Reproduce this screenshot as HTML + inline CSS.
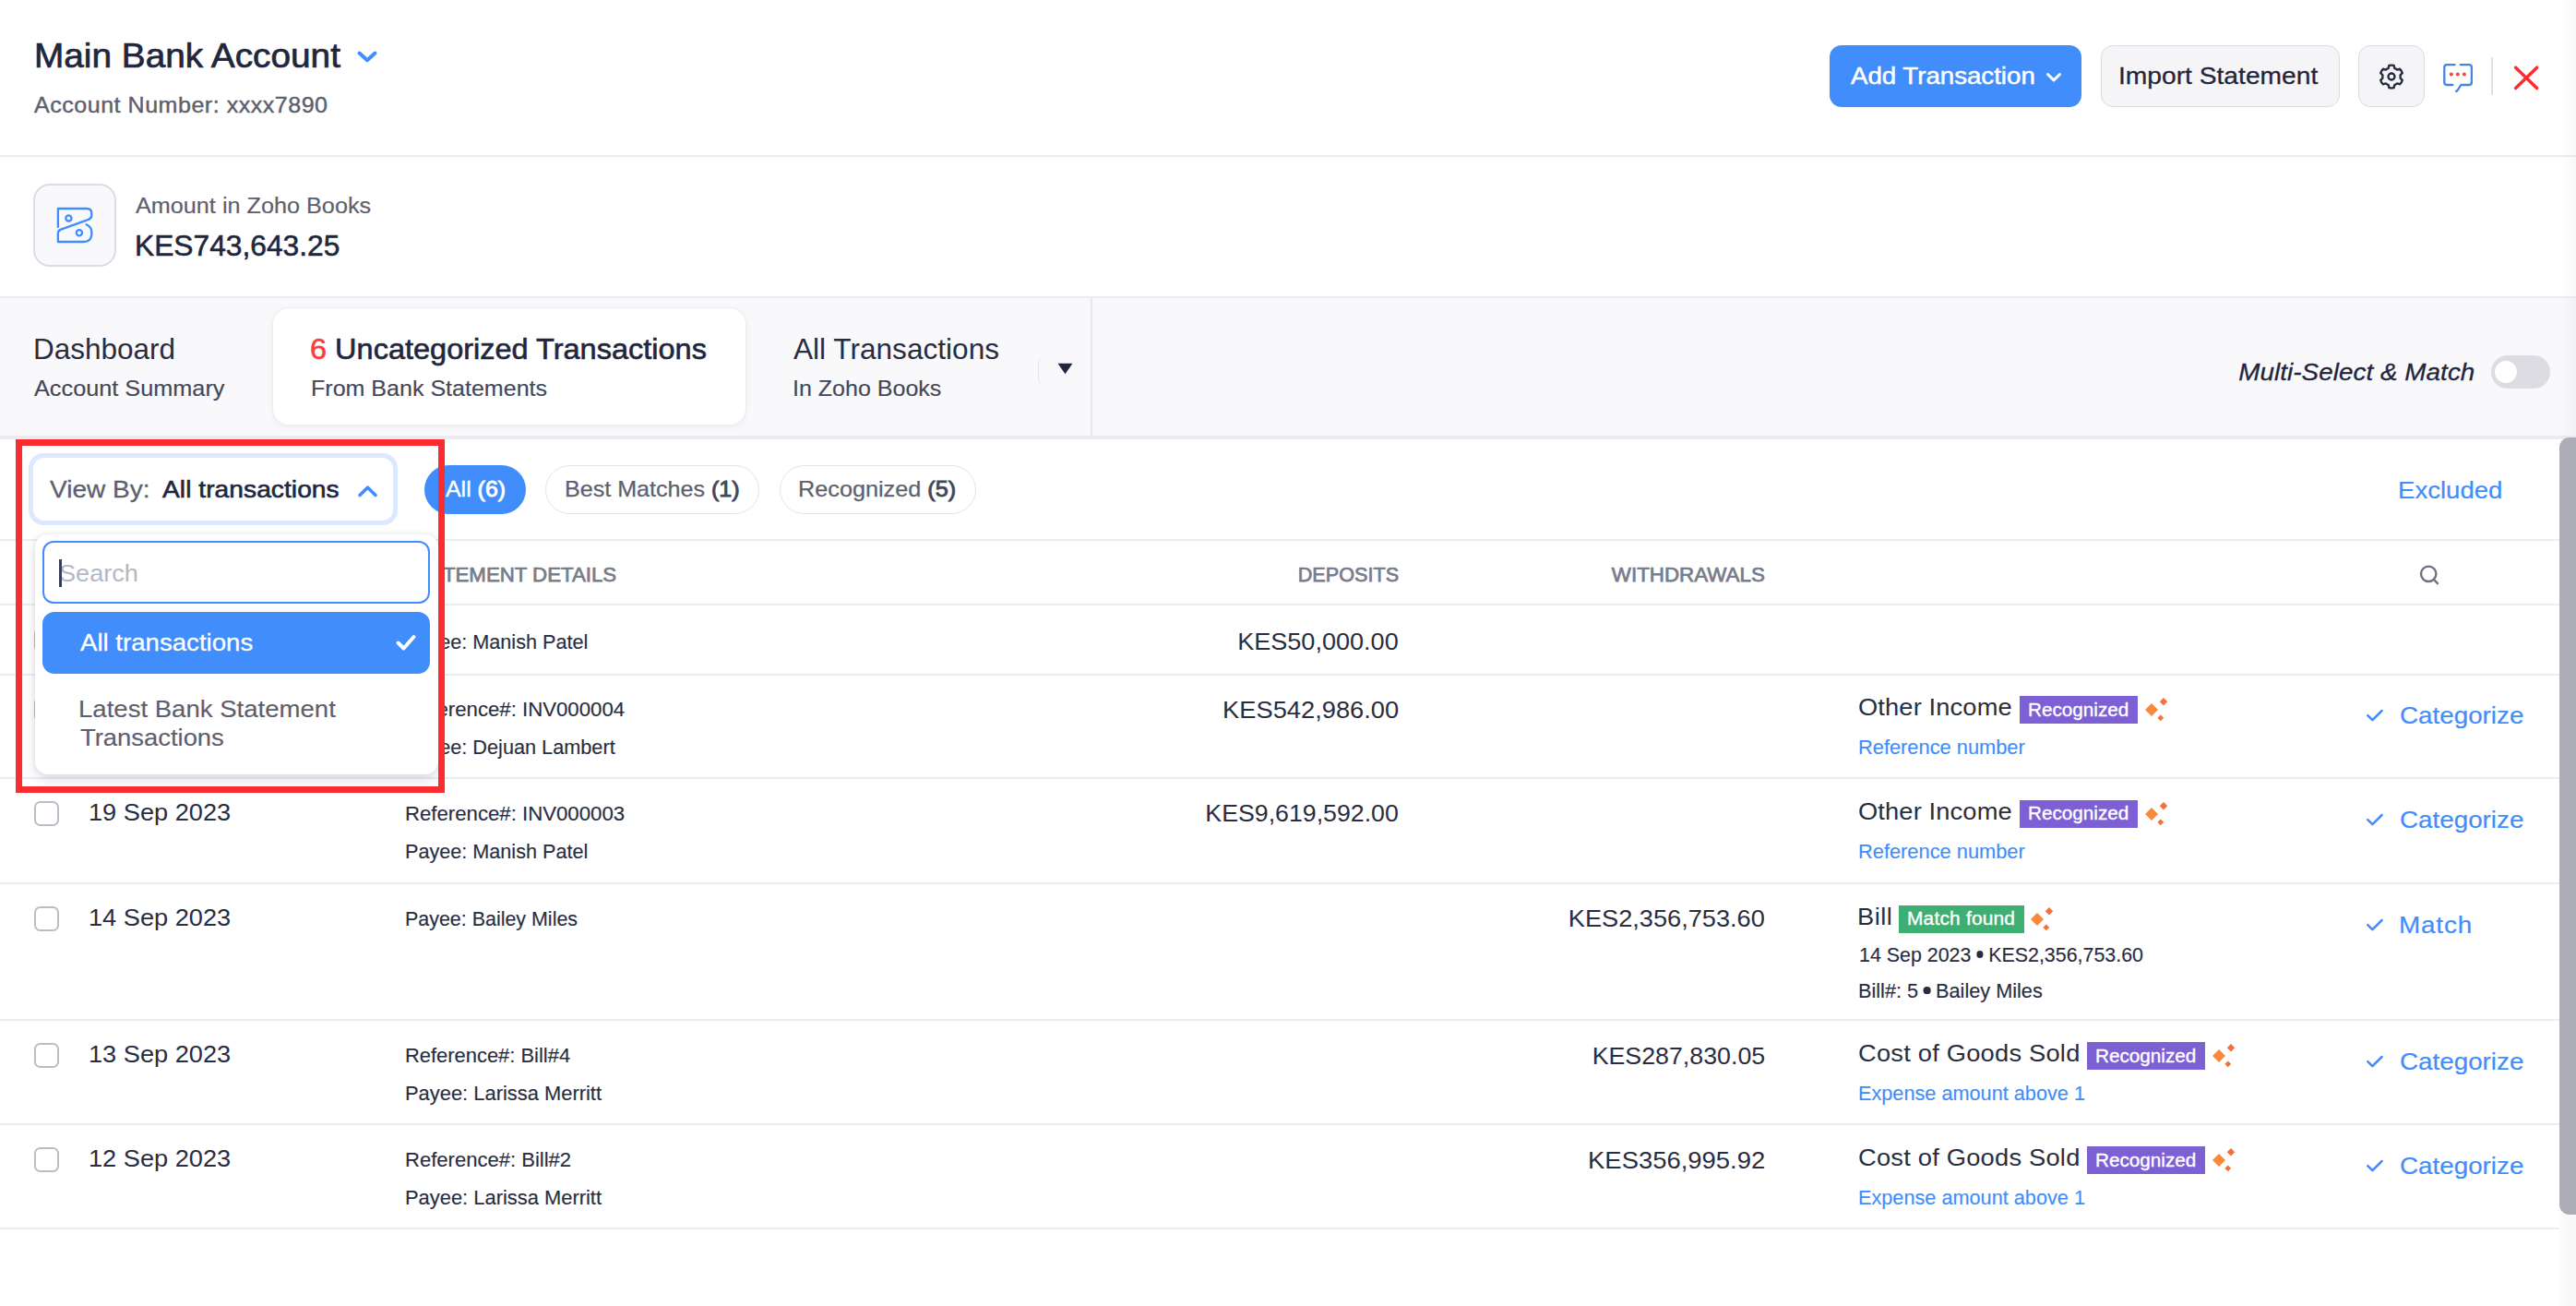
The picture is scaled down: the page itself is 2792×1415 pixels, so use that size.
<!DOCTYPE html>
<html lang="en">
<head>
<meta charset="utf-8">
<title>Main Bank Account – Uncategorized Transactions</title>
<style>
html,body{margin:0;padding:0;background:#fff}
body{width:2792px;height:1415px;overflow:hidden;position:relative;font-family:"Liberation Sans", sans-serif;}
#app{position:absolute;left:0;top:0;width:2792px;height:1415px;overflow:hidden;background:#fff}
section{position:static;margin:0;padding:0}
.t{position:absolute;white-space:nowrap;line-height:1;}
.t b{font-weight:700}
.dot{display:inline-block;width:.36em;height:.36em;border-radius:50%;background:currentColor;vertical-align:.18em;margin:0 -.02em}
</style>
</head>
<body>
<div id="app">
<section class="header">
<div style="position:absolute;left:0;top:167.5px;width:2792px;height:2px;background:#ececf3"></div>
<span class="t" id="title" style="top:43.07px;font-size:36.6px;color:#21263c;left:36.62px;-webkit-text-stroke:0.7px #21263c;transform:scaleX(1.0601);transform-origin:left center;">Main Bank Account</span>
<svg style="position:absolute;left:384px;top:52px" width="28" height="20" viewBox="0 0 28 20"><path d="M5.5 5.5 L14 13.2 L22.5 5.5" fill="none" stroke="#408dfb" stroke-width="4" stroke-linecap="round" stroke-linejoin="round"/></svg>
<span class="t" id="acct" style="top:103.08px;font-size:23.4px;color:#5c606f;left:36.70px;-webkit-text-stroke:0.4px #5c606f;letter-spacing:0.486px;transform:scaleX(1.0700);transform-origin:left center;">Account Number: xxxx7890</span>
<div style="position:absolute;left:1982.5px;top:49.4px;width:273.7px;height:66.2px;border-radius:13px;background:#408dfb"></div>
<span class="t" id="addtx" style="top:69.06px;font-size:26.5px;color:#fff;left:2005.90px;-webkit-text-stroke:0.5px #fff;transform:scaleX(1.0431);transform-origin:left center;">Add Transaction</span>
<svg style="position:absolute;left:2214px;top:75px" width="24" height="18" viewBox="0 0 24 18"><path d="M5.5 5.5 L12 11.8 L18.5 5.5" fill="none" stroke="#fff" stroke-width="3" stroke-linecap="round" stroke-linejoin="round"/></svg>
<div style="position:absolute;left:2276.5px;top:49.4px;width:259.4px;height:66.2px;border-radius:13px;background:#f5f5f8;border:1.5px solid #dbdbe2;box-sizing:border-box"></div>
<span class="t" id="import" style="top:69.06px;font-size:26.5px;color:#21263c;left:2296.37px;-webkit-text-stroke:0.3px #21263c;transform:scaleX(1.0639);transform-origin:left center;">Import Statement</span>
<div style="position:absolute;left:2556.3px;top:49.4px;width:71.3px;height:66.2px;border-radius:13px;background:#f5f5f8;border:1.5px solid #dbdbe2;box-sizing:border-box"></div>
<svg style="position:absolute;left:2575px;top:66.1px" width="34" height="34" viewBox="0 0 34 34" fill="none" stroke="#262a3e" stroke-width="2.35" stroke-linejoin="round"><path d="M14.42 4.87 A12.4 12.4 0 0 1 19.58 4.87 L20.32 7.88 A9.7 9.7 0 0 1 23.24 9.57 L26.21 8.70 A12.4 12.4 0 0 1 28.79 13.17 L26.55 15.32 A9.7 9.7 0 0 1 26.55 18.68 L28.79 20.83 A12.4 12.4 0 0 1 26.21 25.30 L23.24 24.43 A9.7 9.7 0 0 1 20.32 26.12 L19.58 29.13 A12.4 12.4 0 0 1 14.42 29.13 L13.68 26.12 A9.7 9.7 0 0 1 10.76 24.43 L7.79 25.30 A12.4 12.4 0 0 1 5.21 20.83 L7.45 18.68 A9.7 9.7 0 0 1 7.45 15.32 L5.21 13.17 A12.4 12.4 0 0 1 7.79 8.70 L10.76 9.57 A9.7 9.7 0 0 1 13.68 7.88 Z"/><circle cx="17" cy="17" r="3.5"/></svg>
<svg style="position:absolute;left:2645px;top:66px" width="38" height="36" viewBox="0 0 38 36" fill="none" stroke-linecap="round" stroke-linejoin="round"><path d="M15.6 4.2 H7 Q4.3 4.2 4.3 7 V23.3 Q4.3 26 7 26 H13.4 M21.8 4.2 H31.2 Q33.9 4.2 33.9 7 V23.3 Q33.9 26 31.2 26 H22.3 L18.6 31.8 Q18 32.8 17 32.8" stroke="#4285e8" stroke-width="2.3"/><g fill="#f0483e"><circle cx="11.9" cy="14.6" r="2"/><circle cx="18.8" cy="14.6" r="2"/><circle cx="25.9" cy="14.6" r="2"/></g></svg>
<div style="position:absolute;left:2700px;top:61.5px;width:2px;height:41px;background:#dedee6"></div>
<svg style="position:absolute;left:2722px;top:68px" width="32" height="32" viewBox="0 0 32 32"><path d="M4.6 5.2 L27.6 27.6 M27.6 5.2 L4.6 27.6" stroke="#fb2d30" stroke-width="3.5" stroke-linecap="round"/></svg>
</section>
<section class="summary">
<div style="position:absolute;left:0;top:320.5px;width:2792px;height:2px;background:#ececf3"></div>
<div style="position:absolute;left:36.3px;top:199.2px;width:89.6px;height:89.8px;border-radius:18px;background:#f9f9fb;border:2px solid #dcdce4;box-sizing:border-box"></div>
<svg style="position:absolute;left:56px;top:220px" width="50" height="48" viewBox="0 0 50 48" fill="none" stroke="#408dfb" stroke-width="2.3" stroke-linejoin="round" stroke-linecap="round"><path d="M6.9 25.9 V6 H38 Q43.3 6 43.3 11.2 V13.2 Q43.3 16.7 39.9 17.9 L10 28.6 Q6.9 29.7 6.9 32.6 V42 H34.5 Q43.3 42 43.3 33.2 V30.9 Q43.3 26 37.6 23.2"/><circle cx="18.4" cy="16.4" r="3.1"/><circle cx="29.9" cy="32.3" r="3.1"/></svg>
<span class="t" id="amtlbl" style="top:212.07px;font-size:23.5px;color:#5c606f;left:147.10px;-webkit-text-stroke:0.2px #5c606f;letter-spacing:0.035px;transform:scaleX(1.0700);transform-origin:left center;">Amount in Zoho Books</span>
<span class="t" id="amt" style="top:251.07px;font-size:31px;color:#21263c;left:145.85px;-webkit-text-stroke:0.55px #21263c;transform:scaleX(1.0236);transform-origin:left center;">KES743,643.25</span>
</section>
<section class="tabs">
<div style="position:absolute;left:0;top:322.5px;width:2792px;height:149.5px;background:#f9f9fb"></div>
<div style="position:absolute;left:0;top:471.7px;width:2792px;height:4.6px;background:#ececf0"></div>
<div style="position:absolute;left:1182.4px;top:322.5px;width:1.6px;height:149.5px;background:#e7e7ee"></div>
<div style="position:absolute;left:295.8px;top:333.9px;width:512.1px;height:126.4px;border-radius:17px;background:#fff;box-shadow:0 0 0 1px #ececf3, 0 2px 6px rgba(80,80,120,0.10)"></div>
<span class="t" id="tab1a" style="top:364.06px;font-size:30.7px;color:#292d40;left:35.85px;transform:scaleX(1.0267);transform-origin:left center;">Dashboard</span>
<span class="t" id="tab1b" style="top:409.08px;font-size:23.8px;color:#434758;left:36.60px;-webkit-text-stroke:0.15px #434758;transform:scaleX(1.0621);transform-origin:left center;">Account Summary</span>
<span class="t" id="tab2a" style="top:364.06px;font-size:30.7px;color:#21263c;left:336.44px;-webkit-text-stroke:0.6px #21263c;transform:scaleX(1.0589);transform-origin:left center;"><span style="color:#f7403c;-webkit-text-stroke-color:#f7403c">6</span> Uncategorized Transactions</span>
<span class="t" id="tab2b" style="top:409.07px;font-size:24px;color:#434758;left:336.86px;-webkit-text-stroke:0.15px #434758;transform:scaleX(1.0432);transform-origin:left center;">From Bank Statements</span>
<span class="t" id="tab3a" style="top:364.06px;font-size:30.7px;color:#292d40;left:859.80px;transform:scaleX(1.0297);transform-origin:left center;">All Transactions</span>
<span class="t" id="tab3b" style="top:409.07px;font-size:24px;color:#434758;left:858.61px;-webkit-text-stroke:0.15px #434758;transform:scaleX(1.0428);transform-origin:left center;">In Zoho Books</span>
<div style="position:absolute;left:1125px;top:386px;width:12px;height:31px;border-left:1.5px solid #e4e4ea;border-radius:8px 0 0 8px"></div>
<svg style="position:absolute;left:1146px;top:393px" width="17" height="13" viewBox="0 0 17 13"><path d="M0.5 0.7 H16.5 L8.5 12.3 Z" fill="#21263c"/></svg>
<span class="t" id="multi" style="top:390.07px;font-size:26px;color:#21263c;right:109.91px;font-style:italic;-webkit-text-stroke:0.3px #21263c;letter-spacing:0.049px;margin-right:-0.049px;transform:scaleX(1.0700);transform-origin:right center;">Multi-Select &amp; Match</span>
<div style="position:absolute;left:2699.8px;top:385.1px;width:64.4px;height:35.8px;border-radius:18px;background:#dcdce2"><div style="position:absolute;left:4.2px;top:5.9px;width:24.3px;height:24.1px;border-radius:50%;background:#fff"></div></div>
</section>
<section class="filters">
<div style="position:absolute;left:0;top:584.3px;width:2774px;height:2px;background:#ececf3"></div>
<div style="position:absolute;left:459.9px;top:504px;width:110.1px;height:53px;border-radius:27px;background:#408dfb"></div>
<span class="t" id="pill1" style="top:518.07px;font-size:24px;color:#fff;left:482.50px;-webkit-text-stroke:0.4px #fff;transform:scaleX(1.0374);transform-origin:left center;">All <span style="-webkit-text-stroke:0.9px #fff">(6)</span></span>
<div style="position:absolute;left:590.5px;top:504px;width:232.7px;height:53px;border-radius:27px;background:#fff;border:1.5px solid #e3e3ea;box-sizing:border-box"></div>
<span class="t" id="pill2" style="top:518.07px;font-size:24px;color:#5c606f;left:611.85px;-webkit-text-stroke:0.25px #5c606f;transform:scaleX(1.0456);transform-origin:left center;">Best Matches <span style="color:#434758;-webkit-text-stroke:0.9px #434758">(1)</span></span>
<div style="position:absolute;left:844.6px;top:504px;width:213px;height:53px;border-radius:27px;background:#fff;border:1.5px solid #e3e3ea;box-sizing:border-box"></div>
<span class="t" id="pill3" style="top:518.07px;font-size:24px;color:#5c606f;left:864.75px;-webkit-text-stroke:0.25px #5c606f;transform:scaleX(1.0518);transform-origin:left center;">Recognized <span style="color:#434758;-webkit-text-stroke:0.9px #434758">(5)</span></span>
<span class="t" id="excl" style="top:518.07px;font-size:26px;color:#408dfb;left:2598.78px;-webkit-text-stroke:0.2px #408dfb;transform:scaleX(1.0608);transform-origin:left center;">Excluded</span>
</section>
<section class="thead">
<div style="position:absolute;left:0;top:654.3px;width:2774px;height:2px;background:#ececf3"></div>
<span class="t" id="th1" style="top:612.06px;font-size:21.8px;color:#787c8b;left:439.80px;-webkit-text-stroke:0.75px #787c8b;transform:scaleX(1.0201);transform-origin:left center;">STATEMENT DETAILS</span>
<span class="t" id="th2" style="top:612.06px;font-size:21.8px;color:#787c8b;right:1275.77px;-webkit-text-stroke:0.75px #787c8b;transform:scaleX(0.9936);transform-origin:right center;">DEPOSITS</span>
<span class="t" id="th3" style="top:612.06px;font-size:21.8px;color:#787c8b;right:879.15px;-webkit-text-stroke:0.75px #787c8b;transform:scaleX(1.0259);transform-origin:right center;">WITHDRAWALS</span>
<svg style="position:absolute;left:2619px;top:609px" width="28" height="28" viewBox="0 0 28 28" fill="none" stroke="#6d7180" stroke-width="2.4" stroke-linecap="round"><circle cx="13.2" cy="12.8" r="8.2"/><path d="M19 19 L23 23.2"/></svg>
</section>
<section class="row1">
<div style="position:absolute;left:0;top:729.5px;width:2774px;height:2px;background:#ececf3"></div>
<div style="position:absolute;left:36.5px;top:679.8px;width:27.4px;height:27.2px;border-radius:6.5px;border:2px solid #bbbcc6;background:#fff;box-sizing:border-box"></div>
<span class="t" id="r1date" style="top:680.07px;font-size:26px;color:#292d40;left:95.85px;transform:scaleX(1.0458);transform-origin:left center;">21 Sep 2023</span>
<span class="t" id="r1d0" style="top:685.07px;font-size:21.7px;color:#292d40;left:438.80px;-webkit-text-stroke:0.15px #292d40;transform:scaleX(0.9969);transform-origin:left center;">Payee: Manish Patel</span>
<span class="t" id="r1dep" style="top:682.07px;font-size:26px;color:#292d40;right:1275.92px;transform:scaleX(1.0409);transform-origin:right center;">KES50,000.00</span>
</section>
<section class="row2">
<div style="position:absolute;left:0;top:842.2px;width:2774px;height:2px;background:#ececf3"></div>
<div style="position:absolute;left:36.5px;top:755.0px;width:27.4px;height:27.2px;border-radius:6.5px;border:2px solid #bbbcc6;background:#fff;box-sizing:border-box"></div>
<span class="t" id="r2date" style="top:754.07px;font-size:26px;color:#292d40;left:95.85px;transform:scaleX(1.0458);transform-origin:left center;">20 Sep 2023</span>
<span class="t" id="r2d0" style="top:758.07px;font-size:21.7px;color:#292d40;left:438.78px;-webkit-text-stroke:0.15px #292d40;transform:scaleX(1.0231);transform-origin:left center;">Reference#: INV000004</span>
<span class="t" id="r2d1" style="top:799.07px;font-size:21.7px;color:#292d40;left:438.80px;-webkit-text-stroke:0.15px #292d40;">Payee: Dejuan Lambert</span>
<span class="t" id="r2dep" style="top:756.07px;font-size:26px;color:#292d40;right:1275.92px;transform:scaleX(1.0490);transform-origin:right center;">KES542,986.00</span>
<span class="t" id="r2cat" style="top:754.08px;font-size:25.5px;color:#292d40;left:2014.43px;letter-spacing:0.116px;transform:scaleX(1.0700);transform-origin:left center;">Other Income</span>
<div style="position:absolute;left:2189.0px;top:754.3px;width:128.4px;height:29.7px;background:#7d60d4"></div>
<span class="t" id="r2bdg" style="top:760.08px;font-size:19.5px;color:#fff;left:2198.44px;-webkit-text-stroke:0.35px #fff;transform:scaleX(1.0619);transform-origin:left center;">Recognized</span>
<svg style="position:absolute;left:2322.0px;top:753.8px" width="30" height="30" viewBox="0 0 30 30"><path d="M10 8 L17 15 L10 22 L3 15 Z" fill="#f78a3c"/><path d="M23 2 L27.2 6.2 L23 10.4 L18.8 6.2 Z" fill="#f4713a"/><path d="M19.8 20.4 L23.2 23.8 L19.8 27.2 L16.4 23.8 Z" fill="#f4713a"/></svg>
<span class="t" id="r2s0" style="top:800.07px;font-size:21.5px;color:#408dfb;left:2014.48px;-webkit-text-stroke:0.15px #408dfb;transform:scaleX(1.0152);transform-origin:left center;">Reference number</span>
<svg style="position:absolute;left:2562px;top:766.2px" width="24" height="20" viewBox="0 0 24 20"><path d="M4.3 9.1 L9.4 14.2 L19.6 4.0" fill="none" stroke="#408dfb" stroke-width="2.5" stroke-linecap="round" stroke-linejoin="round"/></svg>
<span class="t" id="r2act" style="top:762.07px;font-size:26px;color:#408dfb;left:2601.33px;-webkit-text-stroke:0.2px #408dfb;transform:scaleX(1.0686);transform-origin:left center;">Categorize</span>
</section>
<section class="row3">
<div style="position:absolute;left:0;top:956.3px;width:2774px;height:2px;background:#ececf3"></div>
<div style="position:absolute;left:36.5px;top:867.8px;width:27.4px;height:27.2px;border-radius:6.5px;border:2px solid #bbbcc6;background:#fff;box-sizing:border-box"></div>
<span class="t" id="r3date" style="top:867.07px;font-size:26px;color:#292d40;left:95.85px;transform:scaleX(1.0458);transform-origin:left center;">19 Sep 2023</span>
<span class="t" id="r3d0" style="top:871.07px;font-size:21.7px;color:#292d40;left:438.78px;-webkit-text-stroke:0.15px #292d40;transform:scaleX(1.0231);transform-origin:left center;">Reference#: INV000003</span>
<span class="t" id="r3d1" style="top:912.07px;font-size:21.7px;color:#292d40;left:438.80px;-webkit-text-stroke:0.15px #292d40;transform:scaleX(0.9969);transform-origin:left center;">Payee: Manish Patel</span>
<span class="t" id="r3dep" style="top:868.08px;font-size:26px;color:#292d40;right:1275.93px;transform:scaleX(1.0279);transform-origin:right center;">KES9,619,592.00</span>
<span class="t" id="r3cat" style="top:867.06px;font-size:25.5px;color:#292d40;left:2014.43px;letter-spacing:0.116px;transform:scaleX(1.0700);transform-origin:left center;">Other Income</span>
<div style="position:absolute;left:2189.0px;top:867.1px;width:128.4px;height:29.7px;background:#7d60d4"></div>
<span class="t" id="r3bdg" style="top:872.08px;font-size:19.5px;color:#fff;left:2198.44px;-webkit-text-stroke:0.35px #fff;transform:scaleX(1.0619);transform-origin:left center;">Recognized</span>
<svg style="position:absolute;left:2322.0px;top:866.6px" width="30" height="30" viewBox="0 0 30 30"><path d="M10 8 L17 15 L10 22 L3 15 Z" fill="#f78a3c"/><path d="M23 2 L27.2 6.2 L23 10.4 L18.8 6.2 Z" fill="#f4713a"/><path d="M19.8 20.4 L23.2 23.8 L19.8 27.2 L16.4 23.8 Z" fill="#f4713a"/></svg>
<span class="t" id="r3s0" style="top:913.06px;font-size:21.5px;color:#408dfb;left:2014.48px;-webkit-text-stroke:0.15px #408dfb;transform:scaleX(1.0152);transform-origin:left center;">Reference number</span>
<svg style="position:absolute;left:2562px;top:879.0px" width="24" height="20" viewBox="0 0 24 20"><path d="M4.3 9.1 L9.4 14.2 L19.6 4.0" fill="none" stroke="#408dfb" stroke-width="2.5" stroke-linecap="round" stroke-linejoin="round"/></svg>
<span class="t" id="r3act" style="top:875.07px;font-size:26px;color:#408dfb;left:2601.33px;-webkit-text-stroke:0.2px #408dfb;transform:scaleX(1.0686);transform-origin:left center;">Categorize</span>
</section>
<section class="row4">
<div style="position:absolute;left:0;top:1104.4px;width:2774px;height:2px;background:#ececf3"></div>
<div style="position:absolute;left:36.5px;top:981.9px;width:27.4px;height:27.2px;border-radius:6.5px;border:2px solid #bbbcc6;background:#fff;box-sizing:border-box"></div>
<span class="t" id="r4date" style="top:981.06px;font-size:26px;color:#292d40;left:95.85px;transform:scaleX(1.0458);transform-origin:left center;">14 Sep 2023</span>
<span class="t" id="r4d0" style="top:985.08px;font-size:21.7px;color:#292d40;left:438.81px;-webkit-text-stroke:0.15px #292d40;transform:scaleX(0.9883);transform-origin:left center;">Payee: Bailey Miles</span>
<span class="t" id="r4wd" style="top:982.07px;font-size:26px;color:#292d40;right:879.22px;transform:scaleX(1.0453);transform-origin:right center;">KES2,356,753.60</span>
<span class="t" id="r4cat" style="top:981.07px;font-size:25.5px;color:#292d40;left:2013.36px;letter-spacing:0.475px;transform:scaleX(1.0700);transform-origin:left center;">Bill</span>
<div style="position:absolute;left:2057.6px;top:981.2px;width:136.0px;height:29.7px;background:#3fae72"></div>
<span class="t" id="r4bdg" style="top:986.07px;font-size:19.5px;color:#fff;left:2067.03px;-webkit-text-stroke:0.35px #fff;letter-spacing:0.199px;transform:scaleX(1.0700);transform-origin:left center;">Match found</span>
<svg style="position:absolute;left:2198.2px;top:980.7px" width="30" height="30" viewBox="0 0 30 30"><path d="M10 8 L17 15 L10 22 L3 15 Z" fill="#f78a3c"/><path d="M23 2 L27.2 6.2 L23 10.4 L18.8 6.2 Z" fill="#f4713a"/><path d="M19.8 20.4 L23.2 23.8 L19.8 27.2 L16.4 23.8 Z" fill="#f4713a"/></svg>
<span class="t" id="r4s0" style="top:1025.07px;font-size:21.5px;color:#292d40;left:2014.50px;-webkit-text-stroke:0.15px #292d40;transform:scaleX(0.9955);transform-origin:left center;">14 Sep 2023 <span class="dot"></span> KES2,356,753.60</span>
<span class="t" id="r4s1" style="top:1064.07px;font-size:21.5px;color:#292d40;left:2014.49px;-webkit-text-stroke:0.15px #292d40;transform:scaleX(1.0084);transform-origin:left center;">Bill#: 5 <span class="dot"></span> Bailey Miles</span>
<svg style="position:absolute;left:2562px;top:993.1px" width="24" height="20" viewBox="0 0 24 20"><path d="M4.3 9.1 L9.4 14.2 L19.6 4.0" fill="none" stroke="#408dfb" stroke-width="2.5" stroke-linecap="round" stroke-linejoin="round"/></svg>
<span class="t" id="r4act" style="top:989.06px;font-size:26px;color:#408dfb;left:2600.26px;-webkit-text-stroke:0.2px #408dfb;letter-spacing:0.802px;transform:scaleX(1.0700);transform-origin:left center;">Match</span>
</section>
<section class="row5">
<div style="position:absolute;left:0;top:1217.4px;width:2774px;height:2px;background:#ececf3"></div>
<div style="position:absolute;left:36.5px;top:1130.0px;width:27.4px;height:27.2px;border-radius:6.5px;border:2px solid #bbbcc6;background:#fff;box-sizing:border-box"></div>
<span class="t" id="r5date" style="top:1129.07px;font-size:26px;color:#292d40;left:95.85px;transform:scaleX(1.0458);transform-origin:left center;">13 Sep 2023</span>
<span class="t" id="r5d0" style="top:1133.07px;font-size:21.7px;color:#292d40;left:438.79px;-webkit-text-stroke:0.15px #292d40;transform:scaleX(1.0105);transform-origin:left center;">Reference#: Bill#4</span>
<span class="t" id="r5d1" style="top:1174.07px;font-size:21.7px;color:#292d40;left:438.79px;-webkit-text-stroke:0.15px #292d40;transform:scaleX(1.0099);transform-origin:left center;">Payee: Larissa Merritt</span>
<span class="t" id="r5wd" style="top:1131.07px;font-size:26px;color:#292d40;right:879.23px;transform:scaleX(1.0295);transform-origin:right center;">KES287,830.05</span>
<span class="t" id="r5cat" style="top:1129.08px;font-size:25.5px;color:#292d40;left:2014.43px;letter-spacing:0.205px;transform:scaleX(1.0700);transform-origin:left center;">Cost of Goods Sold</span>
<div style="position:absolute;left:2261.6px;top:1129.3px;width:128.4px;height:29.7px;background:#7d60d4"></div>
<span class="t" id="r5bdg" style="top:1135.08px;font-size:19.5px;color:#fff;left:2271.04px;-webkit-text-stroke:0.35px #fff;transform:scaleX(1.0619);transform-origin:left center;">Recognized</span>
<svg style="position:absolute;left:2394.6px;top:1128.8px" width="30" height="30" viewBox="0 0 30 30"><path d="M10 8 L17 15 L10 22 L3 15 Z" fill="#f78a3c"/><path d="M23 2 L27.2 6.2 L23 10.4 L18.8 6.2 Z" fill="#f4713a"/><path d="M19.8 20.4 L23.2 23.8 L19.8 27.2 L16.4 23.8 Z" fill="#f4713a"/></svg>
<span class="t" id="r5s0" style="top:1175.07px;font-size:21.5px;color:#408dfb;left:2014.49px;-webkit-text-stroke:0.15px #408dfb;transform:scaleX(1.0087);transform-origin:left center;">Expense amount above 1</span>
<svg style="position:absolute;left:2562px;top:1141.2px" width="24" height="20" viewBox="0 0 24 20"><path d="M4.3 9.1 L9.4 14.2 L19.6 4.0" fill="none" stroke="#408dfb" stroke-width="2.5" stroke-linecap="round" stroke-linejoin="round"/></svg>
<span class="t" id="r5act" style="top:1137.07px;font-size:26px;color:#408dfb;left:2601.33px;-webkit-text-stroke:0.2px #408dfb;transform:scaleX(1.0686);transform-origin:left center;">Categorize</span>
</section>
<section class="row6">
<div style="position:absolute;left:0;top:1330.4px;width:2774px;height:2px;background:#ececf3"></div>
<div style="position:absolute;left:36.5px;top:1243.0px;width:27.4px;height:27.2px;border-radius:6.5px;border:2px solid #bbbcc6;background:#fff;box-sizing:border-box"></div>
<span class="t" id="r6date" style="top:1242.07px;font-size:26px;color:#292d40;left:95.85px;transform:scaleX(1.0458);transform-origin:left center;">12 Sep 2023</span>
<span class="t" id="r6d0" style="top:1246.07px;font-size:21.7px;color:#292d40;left:438.78px;-webkit-text-stroke:0.15px #292d40;transform:scaleX(1.0162);transform-origin:left center;">Reference#: Bill#2</span>
<span class="t" id="r6d1" style="top:1287.07px;font-size:21.7px;color:#292d40;left:438.79px;-webkit-text-stroke:0.15px #292d40;transform:scaleX(1.0099);transform-origin:left center;">Payee: Larissa Merritt</span>
<span class="t" id="r6wd" style="top:1244.07px;font-size:26px;color:#292d40;right:879.21px;transform:scaleX(1.0546);transform-origin:right center;">KES356,995.92</span>
<span class="t" id="r6cat" style="top:1242.08px;font-size:25.5px;color:#292d40;left:2014.43px;letter-spacing:0.205px;transform:scaleX(1.0700);transform-origin:left center;">Cost of Goods Sold</span>
<div style="position:absolute;left:2261.6px;top:1242.3px;width:128.4px;height:29.7px;background:#7d60d4"></div>
<span class="t" id="r6bdg" style="top:1248.08px;font-size:19.5px;color:#fff;left:2271.04px;-webkit-text-stroke:0.35px #fff;transform:scaleX(1.0619);transform-origin:left center;">Recognized</span>
<svg style="position:absolute;left:2394.6px;top:1241.8px" width="30" height="30" viewBox="0 0 30 30"><path d="M10 8 L17 15 L10 22 L3 15 Z" fill="#f78a3c"/><path d="M23 2 L27.2 6.2 L23 10.4 L18.8 6.2 Z" fill="#f4713a"/><path d="M19.8 20.4 L23.2 23.8 L19.8 27.2 L16.4 23.8 Z" fill="#f4713a"/></svg>
<span class="t" id="r6s0" style="top:1288.07px;font-size:21.5px;color:#408dfb;left:2014.49px;-webkit-text-stroke:0.15px #408dfb;transform:scaleX(1.0087);transform-origin:left center;">Expense amount above 1</span>
<svg style="position:absolute;left:2562px;top:1254.2px" width="24" height="20" viewBox="0 0 24 20"><path d="M4.3 9.1 L9.4 14.2 L19.6 4.0" fill="none" stroke="#408dfb" stroke-width="2.5" stroke-linecap="round" stroke-linejoin="round"/></svg>
<span class="t" id="r6act" style="top:1250.07px;font-size:26px;color:#408dfb;left:2601.33px;-webkit-text-stroke:0.2px #408dfb;transform:scaleX(1.0686);transform-origin:left center;">Categorize</span>
</section>
<section class="scroll">
<div style="position:absolute;left:2774px;top:0;width:18px;height:476px;background:linear-gradient(90deg,rgba(120,120,130,0) 0%,rgba(120,120,130,0.02) 40%,rgba(120,120,130,0.055) 100%)"></div>
<div style="position:absolute;left:2774px;top:476px;width:18px;height:939px;background:linear-gradient(90deg,#fdfdfd,#f8f8f9 40%,#f9f9fa)"></div>
<div style="position:absolute;left:2774.3px;top:474px;width:20px;height:841.7px;border-radius:11px 0 0 11px;background:#adadb8"></div>
</section>
<section class="viewby">
<div style="position:absolute;left:30.9px;top:490.9px;width:400.1px;height:78.4px;border-radius:16px;background:#dce8fd"></div>
<div style="position:absolute;left:35.9px;top:495.9px;width:390.1px;height:68.4px;border-radius:12px;background:#fff"></div>
<span class="t" id="viewby" style="top:517.06px;font-size:26.3px;color:#5c606f;left:54.40px;-webkit-text-stroke:0.3px #5c606f;transform:scaleX(1.0651);transform-origin:left center;">View By:</span>
<span class="t" id="viewval" style="top:517.06px;font-size:26.3px;color:#21263c;left:175.50px;-webkit-text-stroke:0.6px #21263c;letter-spacing:0.053px;transform:scaleX(1.0700);transform-origin:left center;">All transactions</span>
<svg style="position:absolute;left:384px;top:520px" width="30" height="24" viewBox="0 0 30 24"><path d="M6 16.5 L14.5 8.2 L23 16.5" fill="none" stroke="#408dfb" stroke-width="3.6" stroke-linecap="round" stroke-linejoin="round"/></svg>
</section>
<section class="panel">
<div style="position:absolute;left:38px;top:578.5px;width:436.5px;height:260.5px;border-radius:14px;background:#fff;box-shadow:0 6px 14px rgba(70,70,115,0.17), 0 0 5px rgba(70,70,115,0.11)"></div>
<div style="position:absolute;left:45.6px;top:586px;width:420.3px;height:67.5px;border-radius:12px;background:#fff;border:2.2px solid #408dfb;box-sizing:border-box"></div>
<span class="t" id="srch" style="top:608.07px;font-size:26px;color:#b4b7c4;left:64.46px;transform:scaleX(1.0422);transform-origin:left center;">Search</span>
<div style="position:absolute;left:64.2px;top:605.6px;width:2.4px;height:30.4px;background:#3a3f55"></div>
<div style="position:absolute;left:45.6px;top:662.6px;width:420.3px;height:67.2px;border-radius:13px;background:#408dfb"></div>
<span class="t" id="opt1" style="top:683.06px;font-size:26px;color:#fff;left:87.00px;-webkit-text-stroke:0.3px #fff;transform:scaleX(1.0618);transform-origin:left center;">All transactions</span>
<svg style="position:absolute;left:426px;top:683px" width="28" height="26" viewBox="0 0 28 26"><path d="M5.5 13.5 L11.5 19.5 L22.5 7" fill="none" stroke="#fff" stroke-width="4" stroke-linecap="round" stroke-linejoin="round"/></svg>
<span class="t" id="opt2a" style="top:755.07px;font-size:26px;color:#5c606f;left:85.48px;-webkit-text-stroke:0.15px #5c606f;transform:scaleX(1.0599);transform-origin:left center;">Latest Bank Statement</span>
<span class="t" id="opt2b" style="top:786.07px;font-size:26px;color:#5c606f;left:87.00px;-webkit-text-stroke:0.15px #5c606f;transform:scaleX(1.0536);transform-origin:left center;">Transactions</span>
</section>
<section class="annot">
<div style="position:absolute;left:17px;top:476.3px;width:464.6px;height:382.4px;border:7.2px solid #fb2c30;box-sizing:border-box"></div>
</section>
</div>
</body>
</html>
